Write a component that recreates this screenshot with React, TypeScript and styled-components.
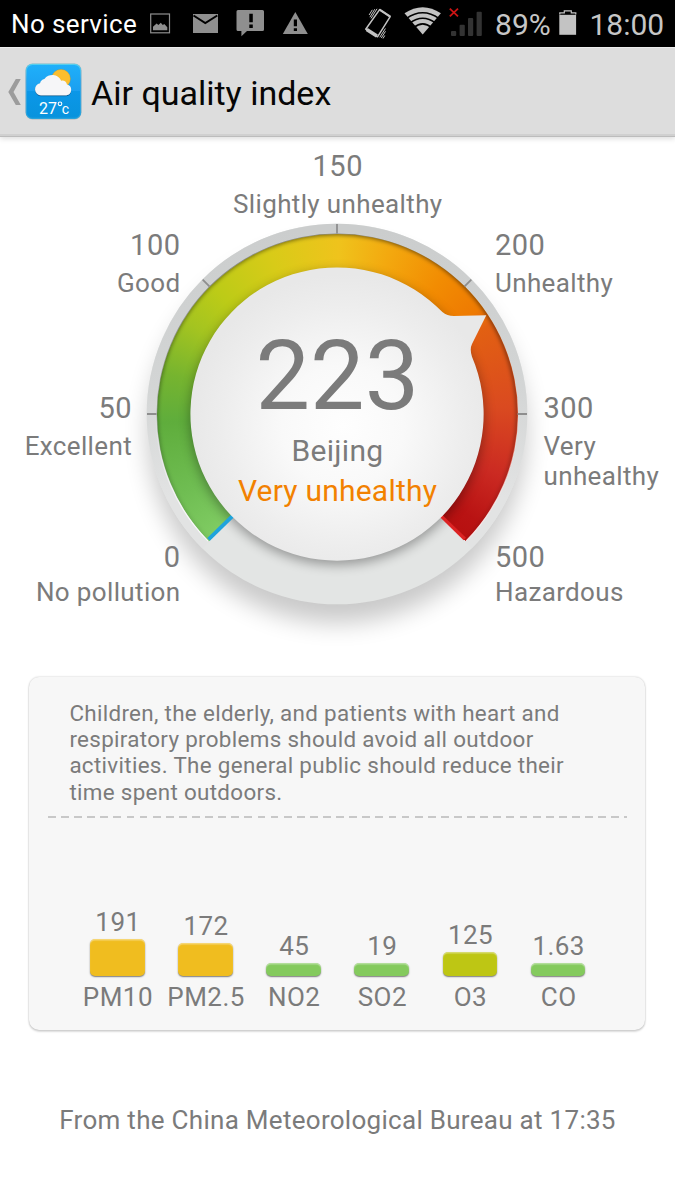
import React from 'react';
import styled, { createGlobalStyle } from 'styled-components';

const GlobalStyle = createGlobalStyle`
  * { box-sizing: border-box; }
  body { margin: 0; background: #fff; font-family: Roboto, sans-serif; color: #7b7b7b; }
  svg { display: block; flex: none; }
`;

const Screen = styled.div`
  display: flex;
  flex-direction: column;
  width: 675px;
  height: 1200px;
  overflow: hidden;
  background: #fff;
`;

/* ---------- status bar ---------- */

const StatusBar = styled.div`
  display: flex;
  align-items: center;
  justify-content: space-between;
  height: 47px;
  flex: none;
  padding: 0 10.5px 0 11px;
  background: #000;
`;

const StatusGroup = styled.div`
  display: flex;
  align-items: center;
`;

const Carrier = styled.span`
  width: 138px;
  font-size: 26px;
  line-height: 30px;
  letter-spacing: 0.38px;
  white-space: nowrap;
  color: #fff;
`;

const StatusText = styled.span<{ $width: number; $spacing: number }>`
  width: ${(p) => p.$width}px;
  padding-top: 2px;
  font-size: 30px;
  line-height: 36px;
  letter-spacing: ${(p) => p.$spacing}px;
  white-space: nowrap;
  color: #c6c6c6;
`;

/* ---------- action bar ---------- */

const ActionBar = styled.header`
  display: flex;
  align-items: center;
  height: 90px;
  flex: none;
  padding: 0 0 2px 7px;
  background: #ddd;
  border-top: 1px solid #ececec;
  box-shadow: inset 0 -1px 0 #bcbcbc, inset 0 -3px 0 #d0d0d0, 0 2px 5px rgba(0, 0, 0, 0.13);
`;

const Title = styled.h1`
  margin: 0 0 0 9px;
  padding-top: 3px;
  font-size: 34px;
  font-weight: 400;
  line-height: 40px;
  color: #060606;
`;

/* ---------- gauge ---------- */

const Gauge = styled.section`
  display: grid;
  grid-template-columns: 180.5px 1fr 180px;
  height: 540px;
  flex: none;
`;

const Scale = styled.div<{ $column: number }>`
  grid-area: 1 / ${(p) => p.$column};
  display: grid;
  grid-template-rows: 163px 149px 1fr;
  padding-top: 93px;
  z-index: 1;
`;

const TopScale = styled.div`
  grid-area: 1 / 2;
  padding-top: 14px;
  z-index: 1;
`;

const Mark = styled.div<{ $align: 'left' | 'right' | 'center'; $indent?: number; $gap?: number }>`
  display: flex;
  flex-direction: column;
  gap: ${(p) => p.$gap ?? 8}px;
  text-align: ${(p) => p.$align};
  padding-${(p) => (p.$align === 'left' ? 'left' : 'right')}: ${(p) => p.$indent ?? 0}px;
`;

const MarkValue = styled.div`
  font-size: 29px;
  line-height: 30px;
  letter-spacing: 0.5px;
`;

const MarkName = styled.div`
  font-size: 26px;
  line-height: 30px;
  letter-spacing: 0.36px;
`;

const Dial = styled.div`
  grid-area: 1 / 1 / 2 / 4;
  display: grid;
  justify-content: center;
  align-content: start;
  padding-top: 77px;
  padding-right: 1px;

  > * {
    grid-area: 1 / 1;
    justify-self: center;
    align-self: start;
  }
`;

const Band = styled.div`
  width: 361px;
  height: 361px;
  margin-top: 19.5px;
  border-radius: 50%;
  background: conic-gradient(
    from 225.4deg,
    #80cc63 0deg,
    #6fbd52 18deg,
    #5fad3c 42deg,
    #76b42f 58deg,
    #a4c420 76deg,
    #bccb17 90deg,
    #d8cb18 112deg,
    #efc31c 135deg,
    #f3a90f 152deg,
    #f28c02 172deg,
    #ee7a02 188deg,
    #e26012 194deg,
    #da4a20 222deg,
    #cb2a22 245deg,
    #b91313 262deg,
    #b71010 269.2deg,
    transparent 269.2deg
  );
`;

const Reading = styled.div`
  display: flex;
  flex-direction: column;
  align-items: center;
  margin-top: 113px;
  padding-left: 1px;
  white-space: nowrap;
`;

const Index = styled.div`
  font-size: 97px;
  line-height: 98px;
  letter-spacing: 0.2px;
`;

const City = styled.div`
  margin-top: 8px;
  font-size: 30px;
  line-height: 36px;
  letter-spacing: 0.3px;
`;

const Level = styled.div`
  margin-top: 4px;
  font-size: 30px;
  line-height: 36px;
  letter-spacing: 0.22px;
  color: #f28100;
`;

/* ---------- details card ---------- */

const Card = styled.section`
  display: flex;
  flex-direction: column;
  width: 616px;
  height: 353px;
  flex: none;
  margin: 0 0 0 29.4px;
  padding: 23px 18px 18px 18.6px;
  border-radius: 10px;
  background: #f7f7f7;
  box-shadow: 0 0 2px rgba(0, 0, 0, 0.25), 0 2px 2px rgba(0, 0, 0, 0.13);
`;

const Advice = styled.p`
  margin: 0;
  padding-left: 21.4px;
  font-size: 22.4px;
  line-height: 26.2px;
  letter-spacing: 0.32px;
  white-space: nowrap;
`;

const Divider = styled.div`
  height: 2px;
  margin-top: 10.7px;
  background: repeating-linear-gradient(90deg, #c8c8c8 0 7.8px, transparent 7.8px 13.1px);
`;

const Chart = styled.div`
  display: grid;
  grid-template-columns: repeat(6, 88.15px);
  justify-content: center;
  align-items: end;
  flex: 1;
`;

const Column = styled.div`
  display: flex;
  flex-direction: column;
  align-items: center;
  font-size: 26px;
  line-height: 30px;
  letter-spacing: 0.45px;

  > span {
    padding-left: 1.2px;
  }
`;

const Bar = styled.div<{ $height: number; $color: string }>`
  width: 54.6px;
  height: ${(p) => p.$height}px;
  margin: 2px 0 6px;
  border-radius: 5px;
  background: ${(p) => p.$color};
  box-shadow: inset 0 1.5px 1px rgba(255, 255, 255, 0.4), 0 1px 1.5px rgba(0, 0, 0, 0.5);
`;

const Source = styled.footer`
  margin-top: 75px;
  font-size: 26px;
  line-height: 30px;
  letter-spacing: 0.29px;
  text-align: center;
`;

const BAR = { amber: '#f0bd1f', green: '#84ca5d', lime: '#bec614' };

const pollutants = [
  { name: 'PM10', value: '191', height: 37, color: BAR.amber },
  { name: 'PM2.5', value: '172', height: 33.5, color: BAR.amber },
  { name: 'NO2', value: '45', height: 12.8, color: BAR.green },
  { name: 'SO2', value: '19', height: 12.8, color: BAR.green },
  { name: 'O3', value: '125', height: 24, color: BAR.lime },
  { name: 'CO', value: '1.63', height: 12.8, color: BAR.green },
];

const NotificationIcons = () => (
  <svg width="160" height="47" viewBox="149 0 160 47" fill="#8f8f8f">
    <rect x="150.7" y="14" width="18.8" height="18.8" fill="none" stroke="#8f8f8f" strokeWidth="1.2" />
    <path d="M153 30.3v-3.6l3.600-3.300 1.800 1.500 2.400-2.200 2 2.200 1.500-.800 3 3.200v3z" />
    <path d="M193 14h25v19h-25z" />
    <path d="M193.500 15.500l11.800 7.600 12-7.600" fill="none" stroke="#000" strokeWidth="2" />
    <path d="M238 10h24.500a1.500 1.500 0 0 1 1.500 1.500v18a1.500 1.500 0 0 1-1.500 1.500H247l-5.600 5.200V31H238a1.500 1.500 0 0 1-1.500-1.500v-18a1.500 1.500 0 0 1 1.500-1.500z" />
    <path d="M249.300 13.700h3.500v8.600h-3.500zM249.300 24.500h3.500V28h-3.500z" fill="#000" />
    <path d="M295.300 12l12.500 22h-25z" />
    <path d="M293.800 19.500h3.200v6.800h-3.200zM293.800 28.200h3.200v2.800h-3.200z" fill="#000" />
  </svg>
);

const VibrateIcon = () => (
  <svg width="41" height="47" viewBox="363 0 41 47" fill="none" stroke="#c3c3c3">
    <path d="M379.600 9.600l10.600 7-12.700 20.200-11.800-7.600z" strokeWidth="1.500" strokeLinejoin="round" />
    <path d="M379.600 9.600l10.600 7" strokeWidth="2.200" />
    <path d="M366.700 29.600l10.200 6.500" strokeWidth="3.600" />
    <path d="M374.800 9.200l-4.900 8M377 8.800l-6 9.600M372.300 9.800l-3.200 5.200M381.300 38l4.200-6.700M379.800 37.300l5.600-8.800M383 38.500l1.800-3" strokeWidth="1" />
  </svg>
);

const WifiIcon = () => (
  <svg width="43" height="47" viewBox="404 0 43 47">
    <path d="M422.700 34.500l-18.200-21.200q18.200-12 36.400 0z" fill="#c3c3c3" />
    <g fill="none" stroke="#000" strokeWidth="1.500">
      <path d="M406.200 18.600q16.500-11.600 33 0" />
      <path d="M409.700 23.200q13-9.800 26 0" />
      <path d="M413.700 27.600q9-7.400 18 0" />
    </g>
  </svg>
);

const SignalIcon = () => (
  <svg width="48.100" height="47" viewBox="447 0 48.100 47">
    <path d="M449.800 8.600l8.200 7.800M458 8.600l-8.200 7.800" stroke="#cc1414" strokeWidth="1.800" />
    <g fill="#333">
      <rect x="451" y="31" width="5.200" height="5" rx="1" />
      <rect x="459.600" y="24.700" width="5.200" height="11.300" rx="1" />
      <rect x="468" y="18" width="5.200" height="18" rx="1" />
      <rect x="476.600" y="11.800" width="5.200" height="24.200" rx="1" />
    </g>
  </svg>
);

const BatteryIcon = () => (
  <svg width="31.500" height="47" viewBox="558 0 31.500 47">
    <path d="M559.800 14.500v-1.700h4.500v-2h7v2h4.500v1.700" fill="none" stroke="#c3c3c3" strokeWidth="1.200" />
    <path d="M559.300 14.800h16.800v20h-16.800z" fill="#c3c3c3" />
  </svg>
);

const BackIcon = () => (
  <svg width="18" height="28" viewBox="7 78 18 28">
    <path d="M15.800 79h5l-7.300 13 7.300 13h-5L8.300 92z" fill="#9c9c9c" />
  </svg>
);

const WeatherIcon = () => (
  <svg width="57" height="57" viewBox="25 63.500 57 57">
    <defs>
      <linearGradient id="sky" x1="0" y1="0" x2="0" y2="1">
        <stop offset="0" stopColor="#1fb0fa" />
        <stop offset="0.500" stopColor="#1b9ff0" />
        <stop offset="0.500" stopColor="#0b97e8" />
        <stop offset="1" stopColor="#0893dd" />
      </linearGradient>
      <linearGradient id="rim" x1="0" y1="0" x2="0" y2="1">
        <stop offset="0" stopColor="#56cfee" />
        <stop offset="0.300" stopColor="#3aa8e6" />
        <stop offset="1" stopColor="#27a3dc" />
      </linearGradient>
      <filter id="cloudShade" x="-20%" y="-20%" width="140%" height="150%">
        <feDropShadow dx="0" dy="0.800" stdDeviation="0.600" floodColor="#053a66" floodOpacity="0.750" />
      </filter>
    </defs>
    <rect x="25.500" y="64" width="56" height="56" rx="7" fill="#a9b4b9" />
    <rect x="26.300" y="64.900" width="54.300" height="54" rx="6" fill="url(#sky)" stroke="url(#rim)" strokeWidth="1.200" />
    <circle cx="61" cy="79.300" r="9.500" fill="#fbbe2e" stroke="#9a8b4a" strokeOpacity="0.500" strokeWidth="0.600" />
    <path
      filter="url(#cloudShade)"
      d="M41.300 95.800a6.100 6.100 0 0 1-1.200-12.100 5.400 5.400 0 0 1 4.300-4.200 9.800 9.800 0 0 1 16.800 1.700 5.200 5.200 0 0 1 5.800 3.800 5.500 5.500 0 0 1-.800 10.800z"
      fill="#f6f6f8"
    />
    <g fill="#fff" fontFamily="Roboto, sans-serif">
      <text x="38.900" y="114.800" fontSize="16">27</text>
      <text x="61.800" y="114.800" fontSize="14">c</text>
    </g>
    <circle cx="60" cy="104.300" r="1.800" fill="none" stroke="#fff" strokeWidth="1.100" />
  </svg>
);

const DISC =
  'M105.400 -101.900Q110 -98 117 -98L149.300 -98.700L135 -70Q132.500 -65 135 -57.200A146.600 146.600 0 1 1 105.400 -101.900Z';

const DialTrack = () => (
  <svg width="480" height="480" viewBox="-240 -200 480 480">
    <defs>
      <linearGradient id="ring" x1="0" y1="0" x2="0" y2="1">
        <stop offset="0" stopColor="#cbcdcd" />
        <stop offset="0.500" stopColor="#d3d5d5" />
        <stop offset="0.850" stopColor="#e2e3e3" />
      </linearGradient>
      <filter id="dialShade" x="-30%" y="-30%" width="160%" height="160%">
        <feGaussianBlur stdDeviation="12" />
      </filter>
    </defs>
    <circle cy="20" r="189" fill="#000" opacity="0.210" filter="url(#dialShade)" />
    <circle r="190.300" fill="#e3e5e4" />
    <path d="M-130.800 130.800A185 185 0 1 1 130.800 130.800" fill="none" stroke="url(#ring)" strokeWidth="10.600" />
  </svg>
);

const DialFace = () => (
  <svg width="480" height="480" viewBox="-240 -200 480 480">
    <defs>
      <linearGradient id="edge" gradientUnits="userSpaceOnUse" x1="0" y1="-180" x2="0" y2="130">
        <stop offset="0" stopColor="#000" stopOpacity="0.550" />
        <stop offset="0.500" stopColor="#000" stopOpacity="0.420" />
        <stop offset="1" stopColor="#000" stopOpacity="0.080" />
      </linearGradient>
      <linearGradient id="gleam" gradientUnits="userSpaceOnUse" x1="0" y1="0" x2="0" y2="110">
        <stop offset="0" stopColor="#fff" stopOpacity="0" />
        <stop offset="1" stopColor="#fff" stopOpacity="0.850" />
      </linearGradient>
      <radialGradient id="face" gradientUnits="userSpaceOnUse" cx="6" cy="12" r="152">
        <stop offset="0" stopColor="#fefefe" />
        <stop offset="0.400" stopColor="#f9f9f9" />
        <stop offset="0.800" stopColor="#ededed" />
        <stop offset="1" stopColor="#e8e8e8" />
      </radialGradient>
      <clipPath id="bandClip">
        <path d="M-128.500 126.800A180.500 180.500 0 1 1 128.500 126.800L0 0Z" />
      </clipPath>
      <filter id="soft" x="-20%" y="-20%" width="140%" height="140%">
        <feGaussianBlur stdDeviation="2.200" />
      </filter>
      <filter id="faceShade" x="-20%" y="-20%" width="140%" height="140%">
        <feGaussianBlur stdDeviation="6" />
      </filter>
    </defs>
    <g clipPath="url(#bandClip)">
      <circle r="181.500" fill="none" stroke="url(#edge)" strokeWidth="4.500" filter="url(#soft)" />
    </g>
    <path d="M-128.900 127.200A181.100 181.100 0 1 1 128.900 127.200" fill="none" stroke="url(#gleam)" strokeWidth="1.100" />
    <circle cy="4" r="147" fill="#000" opacity="0.340" filter="url(#faceShade)" />
    <path d="M127.800 125L103.500 101.400" stroke="#dc2323" strokeWidth="3.400" />
    <path d="M-128.400 125.400L-103.800 101.300" stroke="#1fa3dc" strokeWidth="3.800" />
    <path d={DISC} fill="url(#face)" />
    <g stroke="#8e8e8e" strokeWidth="1.800">
      <path d="M0 -190V-180.500M-190 0H-180.500M190 0H180.500M-134.300 -134.300L-127.600 -127.600M134.300 -134.300L127.600 -127.600" />
    </g>
  </svg>
);

export default function App() {
  return (
    <Screen>
      <GlobalStyle />
      <StatusBar>
        <StatusGroup>
          <Carrier>No service</Carrier>
          <NotificationIcons />
        </StatusGroup>
        <StatusGroup>
          <VibrateIcon />
          <WifiIcon />
          <SignalIcon />
          <StatusText $width={62.9} $spacing={0}>89%</StatusText>
          <BatteryIcon />
          <StatusText $width={75} $spacing={0}>18:00</StatusText>
        </StatusGroup>
      </StatusBar>

      <ActionBar>
        <BackIcon />
        <WeatherIcon />
        <Title>Air quality index</Title>
      </ActionBar>

      <Gauge>
        <Dial>
          <DialTrack />
          <Band />
          <DialFace />
          <Reading>
            <Index>223</Index>
            <City>Beijing</City>
            <Level>Very unhealthy</Level>
          </Reading>
        </Dial>
        <Scale $column={1}>
          <Mark $align="right">
            <MarkValue>100</MarkValue>
            <MarkName>Good</MarkName>
          </Mark>
          <Mark $align="right" $indent={48.5}>
            <MarkValue>50</MarkValue>
            <MarkName>Excellent</MarkName>
          </Mark>
          <Mark $align="right" $gap={5}>
            <MarkValue>0</MarkValue>
            <MarkName>No pollution</MarkName>
          </Mark>
        </Scale>
        <TopScale>
          <Mark $align="center">
            <MarkValue>150</MarkValue>
            <MarkName>Slightly unhealthy</MarkName>
          </Mark>
        </TopScale>
        <Scale $column={3}>
          <Mark $align="left">
            <MarkValue>200</MarkValue>
            <MarkName>Unhealthy</MarkName>
          </Mark>
          <Mark $align="left" $indent={48.5}>
            <MarkValue>300</MarkValue>
            <MarkName>
              Very
              <br />
              unhealthy
            </MarkName>
          </Mark>
          <Mark $align="left" $gap={5}>
            <MarkValue>500</MarkValue>
            <MarkName>Hazardous</MarkName>
          </Mark>
        </Scale>
      </Gauge>

      <Card>
        <Advice>
          Children, the elderly, and patients with heart and
          <br />
          respiratory problems should avoid all outdoor
          <br />
          activities. The general public should reduce their
          <br />
          time spent outdoors.
        </Advice>
        <Divider />
        <Chart>
          {pollutants.map((p) => (
            <Column key={p.name}>
              <span>{p.value}</span>
              <Bar $height={p.height} $color={p.color} />
              <span>{p.name}</span>
            </Column>
          ))}
        </Chart>
      </Card>

      <Source>From the China Meteorological Bureau at 17:35</Source>
    </Screen>
  );
}
